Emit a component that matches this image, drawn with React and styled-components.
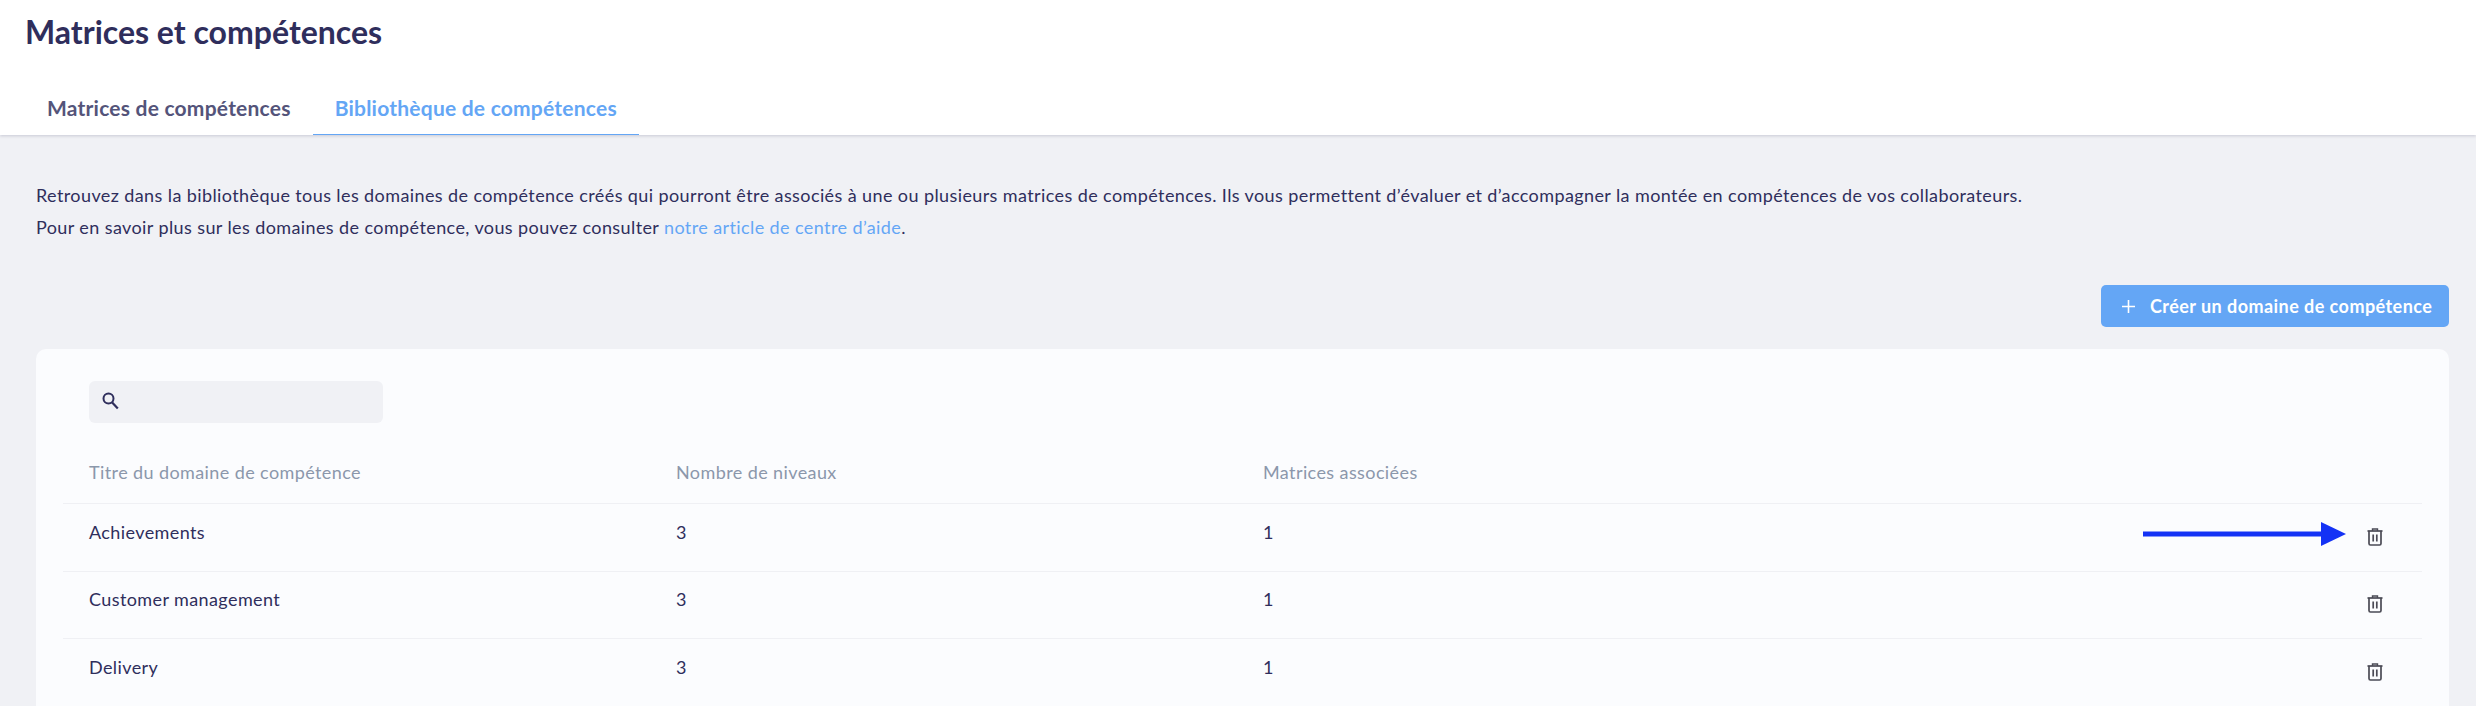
import React from 'react'
import styled, { createGlobalStyle } from 'styled-components'

const navy = '#2f2e5c'
const blue = '#64a6f5'

const GlobalStyle = createGlobalStyle`
    html, body {
        margin: 0;
        height: 100%;
        overflow: hidden;
        background: #f0f1f5;
        font-family: Lato, "Liberation Sans", sans-serif;
        color: ${navy};
    }
`

const Page = styled.div`
    height: 706px;
    overflow: hidden;
`

const Header = styled.header`
    height: 135px;
    box-sizing: border-box;
    background: #fff;
    box-shadow: 0 1px 3px rgba(40, 40, 80, 0.2);
    display: flex;
    flex-direction: column;
    justify-content: space-between;
    position: relative;
`

const Title = styled.h1`
    margin: 0;
    padding: 14px 0 0 25px;
    font-size: 32px;
    line-height: 36px;
    font-weight: 700;
`

const Tabs = styled.nav`
    display: flex;
    padding-left: 25px;
`

const Tab = styled.a`
    box-sizing: border-box;
    height: 52px;
    padding: 0 22px 2px;
    display: flex;
    align-items: center;
    font-size: 21px;
    letter-spacing: 0.22px;
    font-weight: 700;
    color: ${props => props.$active ? blue : '#54547a'};
    border-bottom: 1px solid ${props => props.$active ? blue : 'transparent'};
`

const Content = styled.main`
    padding: 44px 27px 0 36px;
`

const Intro = styled.p`
    margin: 0;
    font-size: 18px;
    letter-spacing: 0.4px;
    line-height: 32px;
`

const Link = styled.a`
    color: ${blue};
`

const Actions = styled.div`
    display: flex;
    justify-content: flex-end;
    margin-top: 42px;
`

const CreateButton = styled.button`
    height: 42px;
    width: 348px;
    box-sizing: border-box;
    padding: 0 0 0 21px;
    display: flex;
    align-items: center;
    gap: 15px;
    border: 0;
    border-radius: 5px;
    background: ${blue};
    color: #fff;
    font-family: inherit;
    font-size: 18px;
    letter-spacing: 0.45px;
    font-weight: 700;
`

const Card = styled.section`
    margin-top: 22px;
    padding: 32px 27px 0;
    background: #fbfcfe;
    border-radius: 10px 10px 0 0;
    height: 400px;
`

const SearchBox = styled.div`
    margin-left: 26px;
    width: 294px;
    height: 42px;
    box-sizing: border-box;
    padding: 11px 0 0 13px;
    background: #f0f1f5;
    border-radius: 6px;
`

const Columns = styled.div`
    display: grid;
    grid-template-columns: 587px 587px 1fr 55px;
    padding-left: 26px;
    align-items: center;
    font-size: 18px;
    letter-spacing: 0.4px;
`

const HeadRow = styled(Columns)`
    height: 80px;
    padding-top: 18px;
    box-sizing: border-box;
    color: #8b97ab;
`

const Row = styled(Columns)`
    height: 67.5px;
    box-sizing: border-box;
    border-top: 1px solid #eff0f4;
    padding-bottom: 11px;
`

const TrashCell = styled.div`
    position: relative;
    display: flex;
    padding-top: 10px;
`

const Arrow = styled.svg`
    position: absolute;
    left: -224px;
    top: 4px;
`

const SearchIcon = () => (
    <svg width="17" height="18" viewBox="0 0 17 18" fill="none" stroke={navy} strokeWidth="2">
        <circle cx="6.5" cy="6.5" r="5" />
        <path d="M10.2 10.5 L15.8 16.5" strokeWidth="2.2" />
    </svg>
)

const PlusIcon = () => (
    <svg width="13" height="13" viewBox="0 0 13 13" stroke="#fff" strokeWidth="1.6">
        <path d="M6.5 0v13M0 6.5h13" />
    </svg>
)

const TrashIcon = () => (
    <svg width="16" height="18" viewBox="0 0 16 18" fill="none" stroke="#4a4a55" strokeWidth="1.7">
        <path d="M0.5 3h15" />
        <path d="M5.5 3V1h5v2" strokeWidth="1.4" />
        <path d="M2 3v12.6c0 .8.6 1.4 1.4 1.4h9.2c.8 0 1.4-.6 1.4-1.4V3" />
        <path d="M6.2 6.5v7M9.8 6.5v7" />
    </svg>
)

const domains = [
    { title: 'Achievements', levels: 3, matrices: 1 },
    { title: 'Customer management', levels: 3, matrices: 1 },
    { title: 'Delivery', levels: 3, matrices: 1 },
]

export default function App() {
    return (
        <Page>
            <GlobalStyle />
            <Header>
                <Title>Matrices et compétences</Title>
                <Tabs>
                    <Tab>Matrices de compétences</Tab>
                    <Tab $active>Bibliothèque de compétences</Tab>
                </Tabs>
            </Header>
            <Content>
                <Intro>
                    Retrouvez dans la bibliothèque tous les domaines de compétence créés qui pourront être associés à une ou plusieurs matrices de compétences. Ils vous permettent d’évaluer et d’accompagner la montée en compétences de vos collaborateurs.
                    <br />
                    Pour en savoir plus sur les domaines de compétence, vous pouvez consulter <Link>notre article de centre d’aide</Link>.
                </Intro>
                <Actions>
                    <CreateButton><PlusIcon />Créer un domaine de compétence</CreateButton>
                </Actions>
                <Card>
                    <SearchBox><SearchIcon /></SearchBox>
                    <HeadRow>
                        <span>Titre du domaine de compétence</span>
                        <span>Nombre de niveaux</span>
                        <span>Matrices associées</span>
                    </HeadRow>
                    {domains.map((domain, index) => (
                        <Row key={domain.title}>
                            <span>{domain.title}</span>
                            <span>{domain.levels}</span>
                            <span>{domain.matrices}</span>
                            <TrashCell>
                                {index === 0 && (
                                    <Arrow width="204" height="24" viewBox="0 0 204 24">
                                        <path d="M0 12h178" stroke="#1432f5" strokeWidth="5" />
                                        <path d="M178 0l25 12-25 12z" fill="#1432f5" />
                                    </Arrow>
                                )}
                                <TrashIcon />
                            </TrashCell>
                        </Row>
                    ))}
                </Card>
            </Content>
        </Page>
    )
}
